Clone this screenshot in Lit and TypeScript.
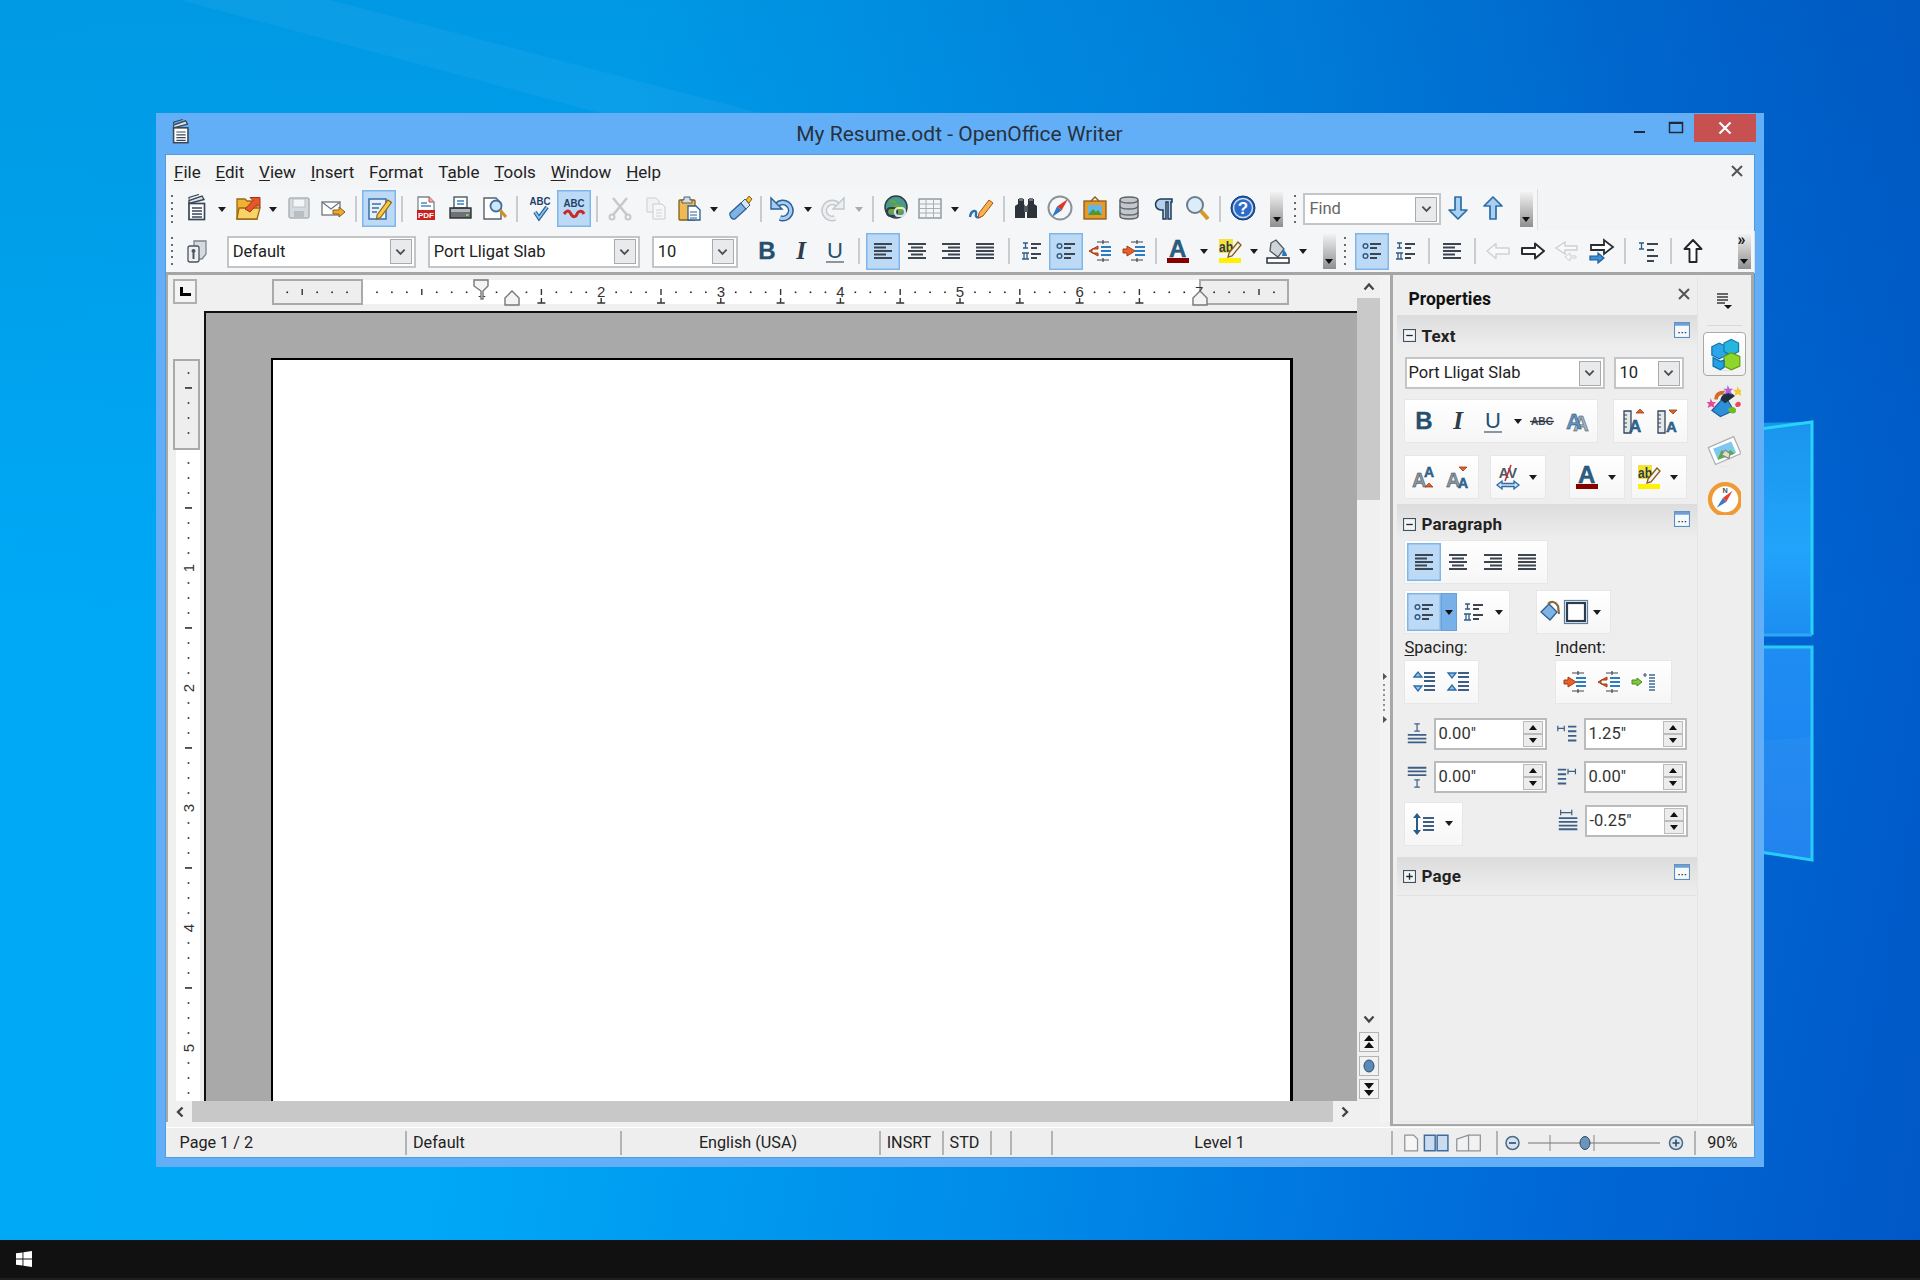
import { LitElement, html, css, svg, TemplateResult } from "lit";
import { customElement } from "lit/decorators.js";

const BL = "#24506f";
const lines = (rows: [number, number, number][], c = "#3d4650", w = 1.7) =>
  svg`<path d=${rows.map(([x, y, l]) => `M${x} ${y}h${l}`).join("")} stroke=${c} stroke-width=${w} fill="none"/>`;

const alignIcon = (rows: [number, number, number][]) => lines(rows, "#3d4650", 1.8);
const numList = svg`<path d="M5 6h5M7.5 6v5M5 11h5M4 16h7M6 16v6M9 16v6M4 22h7" stroke="#2f5c86" stroke-width="1.3" fill="none"/>${lines([[13, 7, 10], [13, 11, 6], [13, 17, 10], [13, 21, 6]], "#3d4650", 1.8)}`;
const bulletList = svg`<circle cx="7.5" cy="9" r="2.3" fill="#cfe2f4" stroke="#2f5c86" stroke-width="1.5"/><circle cx="7.5" cy="19" r="2.3" fill="#cfe2f4" stroke="#2f5c86" stroke-width="1.5"/>${lines([[12, 7, 11], [12, 11, 7], [12, 17, 11], [12, 21, 7]], "#3d4650", 1.8)}`;
const indentBody = svg`<path d="M9 5h12M9 23h12M15 3v4M15 21v4" stroke="#3d4650" stroke-width="1.2"/><path d="M13 10h10M13 14h10M13 18h10" stroke="#2b7cc0" stroke-width="2.2"/>`;
const outline = (d: string, c = "#222", f = "#fff", w = 1.8) => svg`<path d=${d} fill=${f} stroke=${c} stroke-width=${w} stroke-linejoin="round"/>`;
const R_ARROW = "M3 11h13V6.500l9 7.500-9 7.500V17H3z";
const L_ARROW = "M25 11H12V6.500L3 14l9 7.500V17h13z";
const bigA = (x: number, y: number, s: number, c: string) => svg`<text x=${x} y=${y} font-size=${s} font-weight="700" font-family="Liberation Sans" fill=${c} stroke="#173a55" stroke-width=".4">A</text>`;
const tri = (x: number, y: number, up: boolean, c = "#e0612a") => svg`<path d=${up ? `M${x} ${y + 4}l4-4 4 4z` : `M${x} ${y}h8l-4 4z`} fill=${c} stroke="#9a3d14" stroke-width=".8"/>`;
const undoShape = (a: string, b: string) => svg`<path d="M9 11a8 8 0 1 1 3 13" fill="none" stroke=${a} stroke-width="6"/><path d="M9 11a8 8 0 1 1 3 13" fill="none" stroke=${b} stroke-width="3"/><path d="M3 4v11h11z" fill=${b} stroke=${a} stroke-width="1.400"/>`;
const redoShape = (a: string, b: string) => svg`<g transform="translate(28 0) scale(-1 1)">${undoShape(a, b)}</g>`;
const blueLines = (rows: [number, number, number][]) => lines(rows, "#3d5f86", 2);

const ICONS: Record<string, TemplateResult> = {
  writer: svg`<path d="M6 9.500V6.500L19 2l2 3.500L6 9.500z" fill="#dfe5ea" stroke="#3a4858" stroke-width="1.400"/><path d="M6 5.500V3.500l10-3" fill="none" stroke="#3a4858" stroke-width="1.200"/><rect x="6" y="9.500" width="15.500" height="16" fill="#fff" stroke="#3a4858" stroke-width="1.700"/>${lines([[9, 14, 10], [9, 17, 10], [9, 20, 10], [9, 23, 10]], "#3a4858", 1.3)}`,
  open: svg`<path d="M3 5h8l2 2h10v18H3z" fill="#efb234" stroke="#9a6812" stroke-width="1.300"/><path d="M3 25l2-11h21l-3 11z" fill="#fbd266" stroke="#9a6812" stroke-width="1.300"/><path d="M11 15l8-8.500-3-3h10v10l-3-3-7 7.500z" fill="#e8552c" stroke="#a5340f"/>`,
  save: svg`<rect x="4" y="4" width="20" height="20" rx="2" fill="#d5dade" stroke="#aeb3b7" stroke-width="1.500"/><rect x="8" y="5" width="12" height="8" fill="#f4f5f6" stroke="#bcc0c4"/><rect x="9" y="17" width="10" height="7" fill="#b9bec2"/>`,
  mail: svg`<rect x="3" y="8" width="18" height="13" fill="#fff" stroke="#6d7680" stroke-width="1.300"/><path d="M3 8l9 7 9-7" fill="none" stroke="#6d7680" stroke-width="1.200"/><path d="M14 16h6v-3l6 5-6 5v-3h-6z" fill="#f0a92c" stroke="#8a5c12"/>`,
  edit: svg`<rect x="4" y="5" width="17" height="20" fill="#e8f1fa" stroke="#3a6ea5" stroke-width="1.500"/>${lines([[7, 10, 9], [7, 14, 7], [7, 18, 5]], "#3a6ea5", 1.4)}<path d="M12 21L23 6l3.500 2.500L15.500 23.500 11.500 25z" fill="#f7c948" stroke="#8f6410" stroke-width="1.200"/>`,
  pdf: svg`<path d="M6 3h11l5 5v17H6z" fill="#fff" stroke="#7a8794" stroke-width="1.300"/><path d="M9 9h6M9 12h10" stroke="#4e89c2" stroke-width="1.500"/><path d="M17 3v5h5" fill="#f0b2a2" stroke="#c14a33"/><rect x="5" y="16" width="18" height="10" fill="#c92020"/><text x="14" y="24" text-anchor="middle" font-size="8" font-weight="700" font-family="Liberation Sans" fill="#fff">PDF</text>`,
  print: svg`<rect x="8" y="3" width="13" height="11" fill="#fff" stroke="#4c5a68" stroke-width="1.400"/><path d="M11 7h7M11 10h7" stroke="#3a80c0" stroke-width="1.400"/><path d="M4 14h21v10H4z" fill="#6b7177" stroke="#2f3338" stroke-width="1.400"/><path d="M5 15h19v3H5z" fill="#aeb4b9"/><rect x="20" y="20" width="2.500" height="2" fill="#8fcf4f"/>`,
  preview: svg`<path d="M4 4h12l5 5v16H4z" fill="#fff" stroke="#57616c" stroke-width="1.400"/><circle cx="16" cy="12" r="5.500" fill="#cfe5f8" stroke="#3a6ea5" stroke-width="1.800"/><path d="M20 16l6 7" stroke="#d09020" stroke-width="3"/>`,
  spell: svg`<text x="14" y="11" text-anchor="middle" font-size="11" font-weight="700" font-family="Liberation Sans" fill="#1f3f68" textLength="21" lengthAdjust="spacingAndGlyphs">ABC</text><path d="M9 18l4 6 8-11" fill="none" stroke="#1f5f99" stroke-width="4"/><path d="M9 18l4 6 8-11" fill="none" stroke="#8cc2ee" stroke-width="1.800"/>`,
  autospell: svg`<text x="14" y="13" text-anchor="middle" font-size="11" font-weight="700" font-family="Liberation Sans" fill="#1f3f68" textLength="21" lengthAdjust="spacingAndGlyphs">ABC</text><path d="M4 20c3-4 5-4 7 0s5 3 6 0 5-4 7 0" fill="none" stroke="#c62a2a" stroke-width="3"/>`,
  cut: svg`<g stroke="#c6c9cc" fill="none"><path d="M7 4l14 17M21 4L7 21" stroke-width="2.500"/><circle cx="6" cy="23" r="2.500" stroke-width="2"/><circle cx="22" cy="23" r="2.500" stroke-width="2"/></g>`,
  copy: svg`<path d="M6 4h9l3 3v11H6z" fill="#f1f2f3" stroke="#ccd0d3"/><path d="M12 10h9l3 3v12H12z" fill="#f6f7f8" stroke="#c8ccd0"/><path d="M15 16h6M15 19h6M15 22h6" stroke="#d0d4d8"/>`,
  paste: svg`<rect x="4" y="6" width="16" height="20" rx="1" fill="#efba52" stroke="#80601c" stroke-width="1.300"/><path d="M9 6V3h6v3h2v3H7V6z" fill="#d8dde2" stroke="#55606a"/><path d="M13 12h8l4 4v10H13z" fill="#fff" stroke="#2d5e92" stroke-width="1.300"/><path d="M15 18h7M15 21h7M15 24h7" stroke="#2d5e92"/>`,
  brush: svg`<path d="M4 19l11-10 5 6-11 10c-3 1-6-3-5-6z" fill="#7fb2e5" stroke="#2d5e92" stroke-width="1.300"/><path d="M15 9l4-4 5 6-4 4z" fill="#d9e7f5" stroke="#2d5e92"/><path d="M20 6l3-4 3 3-3 4z" fill="#f2c02f" stroke="#8a6412"/>`,
  undo: undoShape("#2b5f94", "#a6cdf1"),
  redo: redoShape("#c2c7cb", "#eceef0"),
  globe: svg`<circle cx="14" cy="13" r="11" fill="#4a9a8a" stroke="#2f3d4c" stroke-width="1.500"/><path d="M7 7c4-2 8 0 7 3s-8 2-9 6c3 5 13 6 17 0 1-4-3-4-5-5" fill="#6fa82e"/><rect x="5" y="14" width="10" height="8" rx="3.500" fill="none" stroke="#323c44" stroke-width="2.200"/><rect x="13" y="14" width="10" height="8" rx="3.500" fill="none" stroke="#dfe3e6" stroke-width="2.200"/>`,
  table: svg`<rect x="3" y="5" width="22" height="19" fill="#f4f5f6" stroke="#8b949c" stroke-width="1.400"/><path d="M3 10h22M3 14.500h22M3 19h22M10 5v19M17.500 5v19" stroke="#a8afb6"/>`,
  draw: svg`<path d="M3 23c1-7 7-8 6-3s4 4 6 0" fill="none" stroke="#2b70b5" stroke-width="2.400"/><path d="M12 19L22 6l4 3-10 13-5 2z" fill="#f3b54a" stroke="#b14a20"/>`,
  binoc: svg`<path d="M6 5h6v5l1 2v12H3V12l3-2zM16 5h6v5l3 2v12H15V12l1-2z" fill="#2c333a"/><rect x="12" y="12" width="4" height="6" fill="#545c64"/><rect x="7" y="4" width="4" height="3" fill="#6c747c"/><rect x="17" y="4" width="4" height="3" fill="#6c747c"/>`,
  compass: svg`<circle cx="14" cy="14" r="11.500" fill="#f4f6f8" stroke="#8a939b" stroke-width="2"/><path d="M22 5L11 12.500l4.500 4z" fill="#d63a2a"/><path d="M6 23l5-10.500 4.500 4z" fill="#2a78c6"/>`,
  gallery: svg`<rect x="3" y="7" width="22" height="18" fill="#e59b2c" stroke="#8a5a14" stroke-width="1.300"/><rect x="7" y="11" width="14" height="10" fill="#63b7e8"/><path d="M7 21l5-6 3 3 2-2 4 5z" fill="#4d9a2c"/><path d="M10 7l4-4 4 4" fill="none" stroke="#8a5a14" stroke-width="1.300"/>`,
  db: svg`<path d="M5 6c0-4 18-4 18 0v16c0 4-18 4-18 0z" fill="#c4c8cc" stroke="#5d646b" stroke-width="1.500"/><path d="M5 6c0 4 18 4 18 0M5 12c0 4 18 4 18 0M5 18c0 4 18 4 18 0" fill="none" stroke="#5d646b" stroke-width="1.300"/>`,
  pilcrow: svg`<path d="M23 5H12a5.500 5.500 0 0 0 0 11h2v9h3V8h2v17h3V8h1z" fill="#b4d0ec" stroke="#1e3a56" stroke-width="1.500"/>`,
  zoom: svg`<circle cx="12" cy="11" r="8" fill="#dcedfa" stroke="#6c7c8a" stroke-width="2"/><path d="M18 17l7 8" stroke="#d39a28" stroke-width="4"/>`,
  help: svg`<circle cx="14" cy="14" r="12" fill="#1f55ab" stroke="#153c7c"/><circle cx="14" cy="14" r="9.500" fill="#2f6cc8" stroke="#cfe0f5" stroke-width="1.500"/><text x="14" y="20" text-anchor="middle" font-size="17" font-weight="700" font-family="Liberation Sans" fill="#fff">?</text>`,
  down: svg`<path d="M11 3h6v13h6L14 25 5 16h6z" fill="#a9d0f2" stroke="#2c6ca6" stroke-width="1.700" stroke-linejoin="round"/>`,
  up: svg`<path d="M11 25h6V12h6L14 3 5 12h6z" fill="#a9d0f2" stroke="#2c6ca6" stroke-width="1.700" stroke-linejoin="round"/>`,
  styles: svg`<path d="M11 4h12v13l-4 5h-8z" fill="#d6dade" stroke="#7b858e" stroke-width="1.300"/><rect x="5" y="9" width="11" height="16" rx="2" fill="#eef0f2" stroke="#4a5560" stroke-width="1.300"/><circle cx="10.500" cy="14" r="2" fill="#4a5560"/><path d="M10.500 16v6" stroke="#4a5560" stroke-width="2"/>`,
  left: alignIcon([[5, 7, 18], [5, 10.5, 12], [5, 14, 18], [5, 17.5, 12], [5, 21, 18]]),
  center: alignIcon([[5, 7, 18], [8, 10.5, 12], [5, 14, 18], [8, 17.5, 12], [5, 21, 18]]),
  right: alignIcon([[5, 7, 18], [11, 10.5, 12], [5, 14, 18], [11, 17.5, 12], [5, 21, 18]]),
  just: alignIcon([[5, 7, 18], [5, 10.5, 18], [5, 14, 18], [5, 17.5, 18], [5, 21, 18]]),
  num: numList,
  bullet: bulletList,
  indL: svg`<g transform="translate(2 0)">${indentBody}<path d="M11 9v3H5v4h6v3L2 14z" transform="translate(-1 0)" fill="#e8602c" stroke="#a03c14"/></g>`,
  indR: svg`<g transform="translate(2 0)">${indentBody}<path d="M4 9v3H0v4h4v3l8-5z" transform="translate(1 0)" fill="#e8602c" stroke="#a03c14"/></g>`,
  fontc: svg`${bigA(5, 20, 24, "#2a5f86")}<rect x="3" y="21" width="22" height="5" fill="#870000"/>`,
  high: svg`<rect x="3" y="2" width="14" height="14" fill="#f3e23c"/><text x="3" y="15" font-size="14" font-weight="700" font-family="Liberation Sans" fill="#2d3a46" textLength="14" lengthAdjust="spacingAndGlyphs">ab</text><path d="M13 16l9-11 3 3-9 11-4 1z" fill="#f1f4f6" stroke="#8a5b14" stroke-width="1.300"/><rect x="3" y="21" width="22" height="5" fill="#fff200"/>`,
  bgc: svg`<path d="M7 6l5-3 8 9-6 8-8-6z" fill="#cfd5da" stroke="#4e5963" stroke-width="1.300"/><path d="M19 12c3 3 4 5 4 7h-5" fill="#2a78b5"/><rect x="3" y="21" width="22" height="5" fill="#fff" stroke="#2b333b" stroke-width="1.500"/>`,
  lDis: outline(L_ARROW, "#cfd3d6", "#f8f9fa", 1.5),
  rBlk: outline(R_ARROW, "#2a2e33", "#fff", 2),
  lrDis: svg`<path d="M24 9H12V5L3 11l9 6v-4h12z" fill="#f8f9fa" stroke="#cdd1d4" stroke-width="1.400"/><path d="M23 19h-6v-3l-5 4 5 4v-3h6z" fill="#f8f9fa" stroke="#cdd1d4"/>`,
  rrBlk: svg`<path d="M4 8h13V3l9 7-9 7v-4H4z" fill="#fff" stroke="#2a2e33" stroke-width="1.800"/><path d="M3 19h8v-3l6 5-6 5v-3H3z" fill="#3d8fd6" stroke="#1c5a94" stroke-width="1.200"/>`,
  one: svg`<path d="M4 6h5M6.500 6v6M4 12h5" stroke="#2f5c86" stroke-width="1.300"/>${lines([[12, 7, 11], [12, 13, 7], [12, 19, 11], [12, 24, 7]], "#3d4650", 1.8)}`,
  upO: outline("M10.500 25h7V12h5L14 3 5.500 12h5z", "#23272b", "#fff", 1.9),
  B: svg`<text x="14" y="22" text-anchor="middle" font-size="24" font-weight="700" font-family="Liberation Sans" fill=${BL} stroke=${BL} stroke-width=".3">B</text>`,
  I: svg`<text x="14" y="22" text-anchor="middle" font-size="25" font-weight="700" font-style="italic" font-family="Liberation Serif" fill="#2f3d4a">I</text>`,
  U: svg`<text x="14" y="21" text-anchor="middle" font-size="22" font-family="Liberation Sans" fill=${BL}>U</text><path d="M5 25h18" stroke="#6e7f8e" stroke-width="1.600"/>`,
  abc: svg`<text x="14" y="18" text-anchor="middle" font-size="10" font-weight="700" font-family="Liberation Sans" fill="#3d4a56" textLength="22" lengthAdjust="spacingAndGlyphs">ABC</text><path d="M2 14.500h24" stroke="#2f3a44" stroke-width="1.300"/>`,
  shadowA: svg`${bigA(10, 24, 22, "#a5adb4")}${bigA(3, 22, 22, "#5f93c2")}`,
  grow: svg`<path d="M4 4h7v22H4z" fill="#e4e8ea" stroke="#34465a" stroke-width="1.300"/><path d="M4 8h3M4 12h3M4 16h3M4 20h3" stroke="#34465a"/>${bigA(9, 25, 17, "#2f6d9c")}${tri(16, 2, true)}`,
  shrink: svg`<path d="M4 4h7v22H4z" fill="#e4e8ea" stroke="#34465a" stroke-width="1.300"/><path d="M4 8h3M4 12h3M4 16h3M4 20h3" stroke="#34465a"/>${bigA(12, 25, 15, "#2f6d9c")}${tri(15, 3, false)}`,
  sup: svg`${bigA(1, 24, 20, "#8c959c")}${bigA(13, 14, 14, "#2f6d9c")}${tri(14, 20, true)}`,
  sub: svg`${bigA(1, 24, 20, "#8c959c")}${bigA(13, 25, 14, "#2f6d9c")}${tri(14, 4, false)}`,
  av: svg`<text x="14" y="15" text-anchor="middle" font-size="14" font-weight="700" font-family="Liberation Sans" fill="#4a5864">AV</text><path d="M17 2l-6 16" stroke="#c62a2a" stroke-width="1.500"/><path d="M3 22l5-4v2.500h12V18l5 4-5 4v-2.500H8V26z" fill="#cfe4f7" stroke="#2c6ca6" stroke-width="1.300"/>`,
  fill: svg`<path d="M2 14l8-8 8 8-7 8z" fill="#7fb2e5" stroke="#2d5e92" stroke-width="1.300"/><path d="M9 6c3-3 7-3 10 2l1 8" fill="none" stroke="#8a6a3a" stroke-width="2.200"/>`,
  border: svg`<rect x="5" y="5" width="18" height="18" fill="#fff" stroke="#2f3d4a" stroke-width="2.200"/><rect x="2.500" y="2.500" width="23" height="23" fill="none" stroke="#5d7fa5" stroke-width="1.200"/>`,
  spInc: svg`<path d="M3 9l4-5 4 5z" fill="#8ec4ef" stroke="#2c6ca6" stroke-width="1.300"/><path d="M3 18h8l-4 5z" fill="#8ec4ef" stroke="#2c6ca6" stroke-width="1.300"/>${blueLines([[13, 5, 11], [13, 9, 11], [13, 13, 11], [13, 18, 11], [13, 22, 11]])}`,
  spDec: svg`<path d="M3 5h8l-4 5z" fill="#8ec4ef" stroke="#2c6ca6" stroke-width="1.300"/><path d="M3 22l4-5 4 5z" fill="#8ec4ef" stroke="#2c6ca6" stroke-width="1.300"/>${blueLines([[13, 5, 11], [13, 9, 11], [13, 14, 11], [13, 18, 11], [13, 22, 11]])}`,
  hang: svg`<path d="M7 10v2H2v4h5v2l5-4z" fill="#7dc93c" stroke="#4d8a18"/><path d="M13 7h4M15 5v4" stroke="#3d5f86" stroke-width="1.200"/><path d="M19 7h6M19 10h6M19 13h6M19 16h6M19 19h6M19 22h6" stroke="#6f8db0" stroke-width="1.800"/>`,
  spAbove: svg`<path d="M10 3h6M13 3v8M10 11h6" stroke="#3d5f86" stroke-width="1.300" fill="none"/>${blueLines([[3, 15, 20], [3, 19, 20], [3, 23, 20]])}`,
  spBelow: svg`<path d="M10 17h6M13 17v8M10 25h6" stroke="#3d5f86" stroke-width="1.300" fill="none"/>${blueLines([[3, 4, 20], [3, 8, 20], [3, 12, 20]])}`,
  inBefore: svg`<path d="M3 5v6M3 8h7M10 5v6" stroke="#3d5f86" stroke-width="1.300" fill="none"/>${blueLines([[14, 6, 9], [14, 11, 9], [14, 16, 9], [14, 21, 9]])}`,
  inAfter: svg`<path d="M14 5v6M14 8h8M22 5v6" stroke="#3d5f86" stroke-width="1.300" fill="none"/>${blueLines([[3, 6, 9], [3, 11, 9], [3, 16, 9], [3, 21, 9]])}`,
  inFirst: svg`<path d="M5 3v6M5 6h12M17 3v6" stroke="#3d5f86" stroke-width="1.300" fill="none"/>${blueLines([[3, 12, 20], [3, 16, 20], [3, 20, 20], [3, 24, 20]])}`,
  lineSp: svg`<path d="M7 6v16" stroke="#2c5c86" stroke-width="2"/><path d="M3 8l4-5 4 5zM3 20h8l-4 5z" fill="#2c5c86"/>${blueLines([[13, 8, 11], [13, 12, 11], [13, 16, 11], [13, 20, 11]])}`,
  tabProps: svg`<path d="M4 8l6-3 6 3v7l-6 3-6-3z" fill="#2ca6e8" stroke="#0f6fb0"/><path d="M14 5l6-3 6 3v7l-6 3-6-3z" fill="#25b6df" stroke="#0f7fb0"/><path d="M14 16l6-3 7 3v8l-7 3-6-3z" fill="#8ed52c" stroke="#5f9e12"/><path d="M5 17l6 3 3-1v6l-3 2-6-3z" fill="#22a0e0" stroke="#0f6fb0"/><ellipse cx="15" cy="29" rx="12" ry="1.500" fill="#c8c8c8"/>`,
  tabStyles: svg`<path d="M4 21L15 9l7 12-11 5z" fill="#2c8fd8" stroke="#1d5f96"/><path d="M11 12c2-6 7-8 12-3l-8 6z" fill="#20303e"/><path d="M6 12c0-6 5-8 9-7l-2 3c-3 0-4 2-4 4z" fill="#d86a28"/><path d="M3 11l1.500 3h3l-2 2 1 3-3-1.500L.5 19l1-3-2-2h3z" fill="#e84a9a"/><path d="M17 0l1.500 3h3l-2 2 1 3-3-1.500L14.500 8l1-3-2-2h3z" fill="#b060e0"/><path d="M25 1l1.500 3h3l-2 2 1 3-3-1.500-3 1.500 1-3-2-2h3z" fill="#f4c830"/><path d="M25 14c3-1 4 3 1 4s-4-3-1-4z" fill="#e84a5a"/><path d="M17 20c3-3 7-2 7 1s-5 4-7-1z" fill="#70b82c"/><ellipse cx="13" cy="29" rx="10" ry="1.300" fill="#c8c8c8"/>`,
  tabGal: svg`<path d="M1 12L22 3l6 14-21 9z" fill="#fff" stroke="#aab0b5"/><path d="M5 13l15-6 4 9-15 6z" fill="#7ec8ef"/><path d="M9 21l3-7 4 3 3-3 4 3-14 5z" fill="#5cae3c"/><path d="M12 18l3-4 4 3-1 4z" fill="#e8e0c0" stroke="#7a8a9a"/><ellipse cx="15" cy="29" rx="10" ry="1.300" fill="#c8c8c8"/>`,
  tabNav: svg`<circle cx="15" cy="15" r="12.500" fill="#fff" stroke="#ef9a34" stroke-width="3.500"/><path d="M21 8l-8 6 3 3z" fill="#e8402c"/><path d="M8 22l5-8 3 3z" fill="#3a7ac6"/><text x="15" y="9.500" text-anchor="middle" font-size="6" font-weight="700" font-family="Liberation Sans" fill="#44525e">N</text>`,
};

const ic = (n: string, cls = "") => html`<svg class="ic ${cls}" viewBox="0 0 28 28">${ICONS[n]}</svg>`;

const ITEM = (s: string) => {
  if (s === "a") return html`<span class="a"></span>`;
  if (s === "a14") return html`<span class="a a14"></span>`;
  if (s === "ad") return html`<span class="a dis"></span>`;
  if (/^s\d*$/.test(s)) return html`<span class="s s${s.slice(1)}"></span>`;
  const on = s.endsWith("*");
  const n = on ? s.slice(0, -1) : s;
  return html`<span class="b ${on ? "on" : ""}">${ic(n)}</span>`;
};
const bar = (items: string[]) => items.map(ITEM);

const combo = (text: string, cls: string) => html`<div class="combo ${cls}"><span class="ct">${text}</span><span class="cb"><svg viewBox="0 0 12 8"><path d="M1.500 1.500L6 6l4.500-4.500" fill="none" stroke="#4a4f55" stroke-width="2"/></svg></span></div>`;
const spin = (val: string, cls: string) => html`<div class="spin ${cls}"><span class="ct">${val}</span><span class="sb"><i class="u"></i><i class="d"></i></span></div>`;
const more = html`<svg class="more" viewBox="0 0 15 15"><rect x=".5" y=".5" width="14" height="14" fill="#f6f9fc" stroke="#5a8cc0"/><rect x=".5" y=".5" width="14" height="3" fill="#6d9fd2"/><path d="M4 10h1.500M7 10h1.500M10 10h1.500" stroke="#3a4a5a" stroke-width="1.300"/></svg>`;
const exp = (open: boolean) => html`<svg class="exp" viewBox="0 0 12 12"><rect x=".5" y=".5" width="11" height="11" fill="#f4f4f4" stroke="#3e5264"/><path d=${open ? "M3 6h6" : "M3 6h6M6 3v6"} stroke="#1e2a34" stroke-width="1.200"/></svg>`;

const hDigit = (x: number, d: number) => svg`<text x=${x} y="18" text-anchor="middle" font-size="15" font-family="Liberation Sans" fill="#333">${d}</text>`;
const hRuler = () => {
  const ox = 90, inch = 119.6, marks = [] as unknown[];
  for (let i = -6; i <= 7 * 8 + 6; i++) {
    const x = ox + (i * inch) / 8;
    if (x < 6 || x > 1012) continue;
    if (i % 8 === 0 && i > 0) { marks.push(hDigit(x, i / 8)); continue; }
    if (i === 0) continue;
    if (i % 4 === 0) marks.push(svg`<rect x=${x - 0.7} y="10" width="1.400" height="6" fill="#333"/>`);
    else marks.push(svg`<rect x=${x - 0.8} y="12.500" width="1.600" height="1.600" fill="#222"/>`);
  }
  const tabs = [] as unknown[];
  for (let i = 3; i <= 13; i++) {
    const x = ox + (i * inch) / 2;
    tabs.push(svg`<path d=${`M${x} 19v4.500M${x - 4} 24h8`} stroke="#333" stroke-width="1.400" fill="none"/>`);
  }
  return html`<svg class="hr" viewBox="0 0 1018 27">
    <rect x="90" y="1" width="838" height="24" fill="#fff"/>
    <rect x="1" y="1" width="89" height="24" fill="#eee" stroke="#aaa" stroke-width="2"/>
    <rect x="928" y="1" width="88" height="24" fill="#eee" stroke="#aaa" stroke-width="2"/>
    ${marks}${tabs}
    <path d="M202 1h14v6l-5 5v8h-2V12l-7-5z" fill="#f4f4f4" stroke="#777" stroke-width="1.400"/>
    <path d="M233 19l7-7 7 7v7h-14z" fill="#f4f4f4" stroke="#777" stroke-width="1.400"/>
    <path d="M921 19l7-7 7 7v7h-14z" fill="#f4f4f4" stroke="#777" stroke-width="1.400"/>
  </svg>`;
};
const vRuler = () => {
  const oy = 137, inch = 120, marks = [] as unknown[];
  for (let i = -5; i <= 5 * 8 + 3; i++) {
    const y = oy + (i * inch) / 8;
    if (i === 0) continue;
    if (i % 8 === 0 && i > 0) { marks.push(svg`<text transform=${`rotate(-90 21 ${y})`} x="21" y=${y + 5} text-anchor="middle" font-size="15" font-family="Liberation Sans" fill="#333">${i / 8}</text>`); continue; }
    if (i % 4 === 0) marks.push(svg`<rect x="17" y=${y - 0.8} width="7" height="1.500" fill="#222"/>`);
    else marks.push(svg`<rect x="19.700" y=${y - 0.8} width="1.600" height="1.600" fill="#222"/>`);
  }
  return html`<svg class="vr" viewBox="0 0 36.500 790">
    <rect x="8" y="137" width="24" height="653" fill="#fff"/>
    <rect x="6" y="49" width="25" height="89" fill="#eee" stroke="#aaa" stroke-width="2"/>
    ${marks}
  </svg>`;
};

@customElement("app-root")
export class AppRoot extends LitElement {
  static styles = css`
    :host { display: flex; flex-direction: column; width: 1920px; height: 1280px; font-family: Roboto, "Liberation Sans", sans-serif; font-size: 17px; color: #222; overflow: hidden; }
    .desk { position: relative; flex: 1; background: linear-gradient(100deg, #00a9f5 0%, #00a8f7 30%, #008ae8 58%, #006bd9 80%, #0058c6 100%); overflow: hidden; }
    .wall { position: absolute; inset: 0; width: 1920px; height: 1240px; }
    .task { height: 40px; background: #111; display: flex; align-items: center; padding-left: 16px; border-bottom: 2px solid #1f1f1f; box-sizing: border-box; flex: none; }
    .task svg { width: 16px; height: 16px; }

    .win { position: absolute; left: 156px; top: 113px; width: 1608px; height: 1054px; background: #63aff7; box-sizing: border-box; padding: 0 10.500px 10px 9.500px; display: flex; flex-direction: column; }
    .tbar { height: 42px; flex: none; display: flex; position: relative; align-items: center; justify-content: center; }
    .tbar .appi { position: absolute; left: 2px; top: 6px; }
    .appi svg.ic { width: 26px; height: 26px; }
    .title { font-size: 21px; color: #27323d; line-height: 42px; }
    .caps { position: absolute; right: -2px; top: 1px; display: flex; align-items: flex-start; }
    .cap { width: 36px; height: 28px; display: flex; justify-content: center; align-items: center; }
    .close { width: 62px; background: #c75050; }
    .cap svg { width: 16px; height: 16px; }
    .client { flex: 1; background: #f3f4f6; display: flex; flex-direction: column; min-height: 0; box-shadow: 0 0 0 1px #4f9be6; }

    .menu { height: 33px; flex: none; display: flex; align-items: center; padding-left: 8.500px; gap: 14.800px; position: relative; }
    .menu span { font-size: 17px; }
    .menu u { text-underline-offset: 2px; }
    .mclose { position: absolute; right: 10px; top: 9px; width: 14px; height: 14px; }

    .rowtb { display: flex; align-items: center; flex: none; }
    .tb1 { height: 42px; }
    .tb1 .b { margin-bottom: 1.500px; }
    .tb2 { height: 42px; }
    .seg { display: flex; align-items: center; height: 100%; background: #f5f6f7; box-shadow: 1px 1px 0 #dedede; flex: none; }
    .seg.wide { flex: 1; min-width: 0; }
    .seg.wide .handle { margin-right: 9px; }
    .handle { width: 2px; height: 28px; margin: 0 7px 0 5px; background: repeating-linear-gradient(#6a6a6a 0 2px, transparent 2px 6.500px); flex: none; }
    .b { width: 34.200px; height: 37px; display: flex; align-items: center; justify-content: center; flex: none; box-sizing: border-box; }
    .b.on { background: #bcdaf6; box-shadow: inset 0 0 0 1.500px #80b5e8; }
    .ic { width: 28px; height: 28px; display: block; flex: none; }
    .a { width: 17px; display: flex; justify-content: center; flex: none; }
    .a14 { width: 14px; }
    .a::before { content: ""; border-style: solid; border-width: 5px 4.500px 0; border-color: #1c1c1c transparent transparent; }
    .a.dis::before { border-top-color: #a8acb0; }
    .s { width: 12px; height: 26px; display: flex; justify-content: center; flex: none; }
    .s::before { content: ""; width: 2px; background: #c9cbcd; }
    .s8 { width: 8px; } .s11 { width: 11px; } .s13 { width: 13.500px; } .s14 { width: 14px; } .s10 { width: 10px; }
    .grip { width: 13px; height: 35px; background: linear-gradient(#f2f2f2, #8f8f8f); flex: none; display: flex; align-items: flex-end; justify-content: center; padding-bottom: 5px; box-sizing: border-box; position: relative; }
    .grip::after { content: ""; border-style: solid; border-width: 5px 4px 0; border-color: #111 transparent transparent; }
    .grip .chev { position: absolute; top: -1px; left: 0; font-size: 16px; font-weight: 700; line-height: 13px; color: #111; }
    .g1 { margin-left: 10px; margin-right: 6px; }
    .g2 { margin-left: 10px; margin-right: 4px; }
    .g3 { margin-left: 11px; margin-right: 3px; }
    .g4 { margin-left: auto; margin-right: 3px; }

    .combo { height: 32px; background: #fff; box-sizing: border-box; border: 2px solid #c3c5c7; display: flex; align-items: center; flex: none; padding: 0 2px 0 4px; }
    .combo .ct { flex: 1; font-size: 16.500px; white-space: nowrap; overflow: hidden; line-height: 24px; }
    .cb { width: 22px; height: 25px; background: #e9eaeb; border: 1px solid #a9abad; box-sizing: border-box; display: flex; align-items: center; justify-content: center; flex: none; }
    .cb svg { width: 11px; height: 8px; }
    .tb2 .combo { margin-top: 1px; }
    .cstyle { width: 189px; margin-left: 13px; }
    .cfont { width: 212px; margin-left: 12px; }
    .csize { width: 86px; margin-left: 12px; margin-right: 12px; }
    .cfont2 { width: 200px; padding-left: 2px; }
    .csize2 { width: 70px; margin-left: 9px; }
    .cfind { width: 138px; }
    .cfind .ct { color: #666; }

    .main { flex: 1; min-height: 0; display: flex; border-top: 3px solid #a5a5a5; background: #f0f0f0; }
    .edit { flex: none; width: 1214.500px; display: flex; border-left: 2px solid #a8a8a8; box-sizing: border-box; margin-bottom: 5px; }
    .lcol { flex: 1; display: flex; flex-direction: column; min-width: 0; }
    .rul { height: 36px; flex: none; display: flex; align-items: flex-start; padding-top: 4px; box-sizing: border-box; }
    .corner { width: 24px; height: 25px; margin-left: 5.500px; margin-right: 75px; background: #f4f4f4; border: 2px solid #b0b0b0; box-sizing: border-box; display: flex; align-items: center; justify-content: center; flex: none; }
    .corner::before { content: ""; width: 8px; height: 6px; border-left: 3px solid #000; border-bottom: 3px solid #000; }
    .hr { width: 1018px; height: 27px; flex: none; }
    .mid { flex: 1; min-height: 0; display: flex; overflow: hidden; }
    .vr { width: 36.500px; height: 790px; flex: none; }
    .docv { flex: 1; background: #a9a9a9; border-left: 2px solid #111; border-top: 2px solid #111; overflow: hidden; padding: 45px 0 0 65px; box-sizing: border-box; min-width: 0; }
    .page { width: 1022px; height: 1000px; background: #fff; border: solid #000; border-width: 2px 3px 0 2px; box-sizing: border-box; }
    .hs { height: 21px; flex: none; display: flex; align-items: center; background: #f0f0f0; }
    .sbtn { width: 24px; display: flex; justify-content: center; flex: none; }
    .sbtn svg { width: 10px; height: 12px; }
    .track { flex: 1; height: 100%; background: #c8c8c8; }
    .vs { width: 23px; flex: none; display: flex; flex-direction: column; align-items: center; background: #f0f0f0; padding: 5px 0 23px; box-sizing: border-box; }
    .vs .varr { width: 14px; height: 14px; display: block; flex: none; }
    .vthumb { width: 100%; height: 202px; background: #c9c9c9; margin-top: 4px; flex: none; }
    .vfill { flex: 1; }
    .nav { width: 20px; height: 20px; box-sizing: border-box; border: 1px solid #b4b4b4; background: #f2f2f2; display: flex; align-items: center; justify-content: center; margin-top: 3.500px; flex: none; }
    .nav svg { width: 14px; height: 16px; }
    .vs .varr.dn { margin-bottom: 3px; }
    .sash { width: 9.500px; flex: none; position: relative; background: #f3f3f3; margin-bottom: 5px; }
    .grips { position: absolute; left: 2px; top: 398px; width: 6px; height: 50px; }

    .side { flex: 1; min-width: 0; display: flex; border: solid #a8a8a8; border-width: 0 3px 2px 3px; background: #eee; padding: 3px 0 0 4px; box-sizing: border-box; margin-bottom: 1px; }
    .panel { width: 301px; flex: none; display: flex; flex-direction: column; background: #eee; border: solid #e5e5e5; border-width: 0 1px 1px 0; box-sizing: border-box; margin-bottom: 2px; }
    .ptitle { height: 37px; flex: none; display: flex; align-items: center; justify-content: space-between; padding: 5px 6px 0 12px; box-sizing: border-box; }
    .ptitle b { font-size: 17.500px; font-weight: 700; color: #111; }
    .x { width: 14px; height: 14px; display: block; margin-top: -11px; }
    .shead { display: flex; align-items: center; flex: none; background: linear-gradient(#dcdcdc, #eeeeee); padding: 8px 0 0 6px; position: relative; box-sizing: border-box; }
    .shead b { font-size: 17px; font-weight: 700; margin-left: 6px; color: #222; letter-spacing: .2px; }
    .exp { width: 13px; height: 13px; flex: none; }
    .more { position: absolute; right: 7px; top: 7px; width: 16px; height: 16px; }
    .h1 { height: 33px; } .h2 { height: 35px; padding-top: 5px; } .h3 { height: 38px; padding-top: 0; }
    .mt6 { margin-top: 6px; } .mt14 { margin-top: 12.500px; } .mt2 { margin-top: 2px; }
    .pb { padding: 0 0 0 8px; display: flex; flex-direction: column; flex: none; }
    .row { display: flex; flex: none; align-items: flex-start; }
    .r-font { margin-top: 9px; } .r-t1 { margin-top: 11px; } .r-t2 { margin-top: 14px; }
    .r-a { margin-top: 2px; } .r-l { margin-top: 8px; }
    .r-lbl { margin-top: 3px; height: 22px; align-items: center; }
    .r-s { margin-top: 3px; } .r-f1 { margin-top: 14.500px; align-items: center; } .r-f2 { margin-top: 11px; align-items: center; } .r-f3 { margin-top: 10px; }
    .box { height: 42px; background: linear-gradient(#fff, #f6f6f6); box-shadow: 0 0 0 1px #e7e7e7; display: flex; align-items: center; flex: none; box-sizing: border-box; }
    .box .b { width: 34.500px; height: 38px; }
    .box .a { width: 15px; }
    .box .ic { width: 28px; height: 28px; }
    .nudge { margin-left: -5px; }
    .bx192 { width: 192px; padding-left: 2px; } .bx73 { width: 73px; margin-left: 17px; padding-left: 3px; }
    .bx73b { width: 73px; padding-left: 3px; } .bx54 { width: 54px; }
    .bx142 { width: 142px; padding-left: 2px; } .bx104 { width: 104px; padding-left: 2px; }
    .bx73c { width: 73px; padding-left: 2px; } .bx115 { width: 115px; padding-left: 2px; } .bx57 { width: 57px; padding-left: 2px; }
    .m13 { margin-left: 13px; } .m25 { margin-left: 25px; } .m8 { margin-left: 8px; } .m28 { margin-left: 28px; } .m78 { margin-left: 78px; } .m94 { margin-left: 94px; }
    .abtn { width: 16px; height: 38px; background: #78b1e9; box-shadow: inset 0 0 0 1px #6a9fd8; display: flex; align-items: center; justify-content: center; flex: none; }
    .abtn::before { content: ""; border-style: solid; border-width: 5px 4.500px 0; border-color: #111 transparent transparent; }
    .lbl { font-size: 16.500px; }
    .lbl u { text-underline-offset: 2px; }
    .w151 { width: 151px; }
    .spin { height: 32px; background: #fff; box-sizing: border-box; border: 2px solid #b9bbbd; display: flex; align-items: center; padding: 0 2px 0 3px; flex: none; }
    .spin .ct { flex: 1; font-size: 16.500px; color: #333; }
    .sb { width: 20px; height: 26px; display: flex; flex-direction: column; flex: none; }
    .sb i { flex: 1; background: #ececec; border: 1px solid #b9bbbd; display: flex; align-items: center; justify-content: center; }
    .sb i::before { content: ""; border-style: solid; border-color: #111 transparent; }
    .sb i.u::before { border-width: 0 4.500px 5px; }
    .sb i.d::before { border-width: 5px 4.500px 0; }
    .s1 { width: 113px; } .s2 { width: 103px; }
    .rowi { width: 29px; display: flex; justify-content: flex-start; flex: none; }
    .rowi .ic { width: 26px; height: 26px; }
    .r-f3 .rowi { margin-top: 4px; }
    .g9 { margin-left: 8px; }
    .pfill { flex: 1; border-top: 1px solid #e2e2e2; }

    .tabs { flex: 1; min-width: 0; display: flex; flex-direction: column; align-items: center; }
    .tmenu { width: 20px; height: 20px; margin-top: 12px; flex: none; }
    .tsep { width: 35px; height: 1px; background: #d9d9d9; margin-top: 15px; flex: none; }
    .tab { width: 43px; height: 44px; margin-top: 6px; box-sizing: border-box; border: 1.500px solid #a9a9a9; border-radius: 4px; background: linear-gradient(#fff, #f2f2f2); display: flex; align-items: center; justify-content: center; flex: none; }
    .tab .ic, .tabi .ic { width: 34px; height: 34px; }
    .tabi { height: 48px; width: 43px; display: flex; align-items: center; justify-content: center; flex: none; }
    .tab + .tabi { margin-top: 2px; }

    .status { height: 30px; flex: none; display: grid; grid-template-columns: 239.500px 215px 259px 63px 48px 20px 41px 340px 105px 198px 1fr; align-items: center; background: #eee; border-top: 1px solid #fff; box-sizing: border-box; font-size: 16.200px; color: #222; }
    .cell { height: 24px; display: flex; align-items: center; border-left: 2px solid #b4b4b4; box-sizing: border-box; white-space: nowrap; }
    .cell.first { border-left: 0; padding-left: 14px; }
    .pl { padding-left: 6px; } .c { justify-content: center; padding-right: 5px; }
    .cell svg { display: block; flex: none; }
    .vw { width: 103px; height: 24px; }
    .zoomc { width: 196px; height: 24px; }
  `;

  render() {
    return html`
      <div class="desk">
        <svg class="wall" viewBox="0 0 1920 1240">
          <defs>
            <linearGradient id="v" x1="0" y1="0" x2="0" y2="1"><stop offset="0" stop-color="#000a40" stop-opacity=".1"/><stop offset=".5" stop-color="#000a40" stop-opacity="0"/><stop offset="1" stop-color="#000" stop-opacity="0"/></linearGradient>
            <linearGradient id="p1" x1="0" y1="0" x2="0" y2="1"><stop offset="0" stop-color="#1a95ee"/><stop offset=".6" stop-color="#22a4fb"/><stop offset="1" stop-color="#1c8df2"/></linearGradient>
            <linearGradient id="p2" x1="0" y1="0" x2="0" y2="1"><stop offset="0" stop-color="#1f8df3"/><stop offset="1" stop-color="#1a7fee"/></linearGradient>
          </defs>
          <rect width="1920" height="1240" fill="url(#v)"/>
          <path d="M330 0L760 113H600L180 0z" fill="#fff" opacity=".045"/>
          <path d="M1700 424L1812 422V635H1700z" fill="url(#p1)"/>
          <path d="M1700 646H1812V860L1700 846z" fill="url(#p2)"/>
          <path d="M1700 745L1812 737V860L1700 846z" fill="#fff" opacity=".035"/>
          <path d="M1760 429L1812 422V635" fill="none" stroke="#27d3f8" stroke-width="3"/>
          <path d="M1764 635H1812" stroke="#2da8f8" stroke-width="3"/>
          <path d="M1764 647H1812V860L1760 852" fill="none" stroke="#27cdf8" stroke-width="3"/>
        </svg>
        <div class="win">
          <div class="tbar">
            <span class="appi">${ic("writer")}</span>
            <span class="title">My Resume.odt - OpenOffice Writer</span>
            <div class="caps">
              <div class="cap"><svg viewBox="0 0 16 16"><path d="M2 12h11" stroke="#1d2a38" stroke-width="2"/></svg></div>
              <div class="cap"><svg viewBox="0 0 16 16"><rect x="1.500" y="2.500" width="13" height="10" fill="none" stroke="#1d2a38" stroke-width="1.500"/><path d="M1 3h14" stroke="#1d2a38" stroke-width="2"/></svg></div>
              <div class="cap close"><svg viewBox="0 0 16 16"><path d="M2.500 2.500l11 11M13.500 2.500l-11 11" stroke="#fff" stroke-width="2.200"/></svg></div>
            </div>
          </div>
          <div class="client">
            <div class="menu">
              <span><u>F</u>ile</span><span><u>E</u>dit</span><span><u>V</u>iew</span><span><u>I</u>nsert</span><span>F<u>o</u>rmat</span><span>T<u>a</u>ble</span><span><u>T</u>ools</span><span><u>W</u>indow</span><span><u>H</u>elp</span>
              <svg class="mclose" viewBox="0 0 14 14"><path d="M2 2l10 10M12 2L2 12" stroke="#555" stroke-width="2"/></svg>
            </div>
            <div class="rowtb tb1">
              <div class="seg">
                <span class="handle"></span>
                ${bar(["writer", "a", "open", "a", "save", "mail", "s", "edit*", "s", "pdf", "print", "preview", "s", "spell", "autospell*", "s", "cut", "copy", "paste", "a", "brush", "s8", "undo", "a", "redo", "ad", "s11", "globe", "table", "a", "draw", "s11", "binoc", "compass", "gallery", "db", "pilcrow", "zoom", "s", "help"])}
                <span class="grip g1"></span>
              </div>
              <div class="seg">
                <span class="handle"></span>
                ${combo("Find", "cfind")}
                <span class="b">${ic("down")}</span><span class="b">${ic("up")}</span>
                <span class="grip g2"></span>
              </div>
            </div>
            <div class="rowtb tb2">
              <div class="seg">
                <span class="handle"></span>
                ${bar(["styles"])}
                ${combo("Default", "cstyle")}${combo("Port Lligat Slab", "cfont")}${combo("10", "csize")}
                ${bar(["B", "I", "U", "s13", "left*", "center", "right", "just", "s", "num", "bullet*", "indL", "indR", "s10", "fontc", "a", "high", "a14", "bgc", "a"])}
                <span class="grip g3"></span>
              </div>
              <div class="seg wide">
                <span class="handle"></span>
                ${bar(["bullet*", "num", "s", "left", "s", "lDis", "rBlk", "lrDis", "rrBlk", "s14", "one", "s10", "upO"])}
                <span class="grip g4"><span class="chev">»</span></span>
              </div>
            </div>
            <div class="main">
              <div class="edit">
                <div class="lcol">
                  <div class="rul"><span class="corner"></span>${hRuler()}</div>
                  <div class="mid">
                    ${vRuler()}
                    <div class="docv"><div class="page"></div></div>
                  </div>
                  <div class="hs">
                    <span class="sbtn"><svg viewBox="0 0 10 12"><path d="M7.500 1.500L3 6l4.500 4.500" fill="none" stroke="#444" stroke-width="2.400"/></svg></span>
                    <span class="track"></span>
                    <span class="sbtn"><svg viewBox="0 0 10 12"><path d="M2.500 1.500L7 6l-4.500 4.500" fill="none" stroke="#444" stroke-width="2.400"/></svg></span>
                  </div>
                </div>
                <div class="vs">
                  <svg class="varr" viewBox="0 0 14 14"><path d="M2.500 9.500L7 4.500l4.500 5" fill="none" stroke="#444" stroke-width="2.200"/></svg>
                  <div class="vthumb"></div>
                  <div class="vfill"></div>
                  <svg class="varr dn" viewBox="0 0 14 14"><path d="M2.500 4.500L7 9.500l4.500-5" fill="none" stroke="#444" stroke-width="2.200"/></svg>
                  <div class="nav"><svg viewBox="0 0 14 16"><path d="M7 1l5 6H2zM7 8l5 6H2z" fill="#111"/></svg></div>
                  <div class="nav"><svg viewBox="0 0 14 16"><ellipse cx="7" cy="8" rx="5" ry="6" fill="#5a8ab5" stroke="#2d4c68"/></svg></div>
                  <div class="nav"><svg viewBox="0 0 14 16"><path d="M2 2h10L7 8zM2 9h10l-5 6z" fill="#111"/></svg></div>
                </div>
              </div>
              <div class="sash">
                <svg class="grips" viewBox="0 0 6 50"><path d="M1 0l4 3.500L1 7zM1 43l4 3.500L1 50z" fill="#555"/><path d="M2 11v2M2 16v2M2 21v2M2 26v2M2 31v2M2 36v2" stroke="#666" stroke-width="1.400"/></svg>
              </div>
              <div class="side">
                <div class="panel">
                  <div class="ptitle"><b>Properties</b><svg class="x" viewBox="0 0 14 14"><path d="M2 2l10 10M12 2L2 12" stroke="#555" stroke-width="2"/></svg></div>
                  <div class="shead h1">${exp(true)}<b>Text</b>${more}</div>
                  <div class="pb">
                    <div class="row r-font">${combo("Port Lligat Slab", "cfont2")}${combo("10", "csize2")}</div>
                    <div class="row r-t1">
                      <div class="box bx192">${bar(["B", "I", "U", "a", "abc", "shadowA"])}</div>
                      <div class="box bx73">${bar(["grow", "shrink"])}</div>
                    </div>
                    <div class="row r-t2">
                      <div class="box bx73b">${bar(["sup", "sub"])}</div>
                      <div class="box bx54 m13">${bar(["av", "a"])}</div>
                      <div class="box bx54 m25">${bar(["fontc", "a"])}</div>
                      <div class="box bx54 m8">${bar(["high", "a"])}</div>
                    </div>
                  </div>
                  <div class="shead h2 mt6">${exp(true)}<b>Paragraph</b>${more}</div>
                  <div class="pb">
                    <div class="row r-a"><div class="box bx142">${bar(["left*", "center", "right", "just"])}</div></div>
                    <div class="row r-l">
                      <div class="box bx104">${bar(["bullet*"])}<span class="abtn"></span>${bar(["num", "a"])}</div>
                      <div class="box bx73c m28">${ic("fill")}${ic("border", "nudge")}<span class="a"></span></div>
                    </div>
                    <div class="row r-lbl"><span class="lbl w151"><u>S</u>pacing:</span><span class="lbl"><u>I</u>ndent:</span></div>
                    <div class="row r-s">
                      <div class="box bx73b">${bar(["spInc", "spDec"])}</div>
                      <div class="box bx115 m78">${bar(["indR", "indL", "hang"])}</div>
                    </div>
                    <div class="row r-f1"><span class="rowi">${ic("spAbove")}</span>${spin('0.00"', "s1")}<span class="rowi g9">${ic("inBefore")}</span>${spin('1.25"', "s2")}</div>
                    <div class="row r-f2"><span class="rowi">${ic("spBelow")}</span>${spin('0.00"', "s1")}<span class="rowi g9">${ic("inAfter")}</span>${spin('0.00"', "s2")}</div>
                    <div class="row r-f3"><div class="box bx57">${bar(["lineSp", "a"])}</div><span class="rowi m94">${ic("inFirst")}</span>${spin('-0.25"', "s2 mt2")}</div>
                  </div>
                  <div class="shead h3 mt14">${exp(false)}<b>Page</b>${more}</div>
                  <div class="pfill"></div>
                </div>
                <div class="tabs">
                  <svg class="tmenu" viewBox="0 0 20 20"><path d="M3 4h11M3 7h11M3 10h11M3 13h8" stroke="#3a3a3a" stroke-width="1.400"/><path d="M10 15h8l-4 4z" fill="#111"/></svg>
                  <span class="tsep"></span>
                  <div class="tab">${ic("tabProps")}</div>
                  <div class="tabi">${ic("tabStyles")}</div>
                  <div class="tabi">${ic("tabGal")}</div>
                  <div class="tabi">${ic("tabNav")}</div>
                </div>
              </div>
            </div>
            <div class="status">
              <div class="cell first">Page 1 / 2</div>
              <div class="cell pl">Default</div>
              <div class="cell c">English (USA)</div>
              <div class="cell c">INSRT</div>
              <div class="cell c">STD</div>
              <div class="cell"></div>
              <div class="cell"></div>
              <div class="cell c">Level 1</div>
              <div class="cell">
                <svg class="vw" viewBox="0 0 105 24">
                  <path d="M12 4h9l4 4v12H12z" fill="#f6f6f6" stroke="#8e9499" stroke-width="1.300"/>
                  <path d="M32 4h11v16H32zM45 4h11v16H45z" fill="#c9dcf0" stroke="#3f6c9e" stroke-width="1.500"/>
                  <path d="M65 8l12-4v16H65zM77 4h12v16H77z" fill="#f2f2f2" stroke="#8e9499" stroke-width="1.300"/>
                </svg>
              </div>
              <div class="cell">
                <svg class="zoomc" viewBox="0 0 196 24">
                  <circle cx="14.500" cy="12" r="6.500" fill="#d6e2ee" stroke="#4a6a88" stroke-width="1.500"/><path d="M11 12h7" stroke="#2d4c68" stroke-width="1.600"/>
                  <path d="M30 12h132" stroke="#9a9a9a" stroke-width="1.600"/><path d="M52 4v16M96 4v16" stroke="#888"/>
                  <ellipse cx="87" cy="12" rx="5" ry="6.500" fill="#6a94b8" stroke="#2d4c68"/>
                  <circle cx="178" cy="12" r="6.500" fill="#d6e2ee" stroke="#4a6a88" stroke-width="1.500"/><path d="M174.500 12h7M178 8.500v7" stroke="#2d4c68" stroke-width="1.600"/>
                </svg>
              </div>
              <div class="cell c">90%</div>
            </div>
          </div>
        </div>
      </div>
      <div class="task">
        <svg viewBox="0 0 16 16"><path d="M0 2.300L6.500 1.400V7.500H0zM7.400 1.300L16 0V7.500H7.400zM0 8.400H6.500V14.600L0 13.700zM7.400 8.400H16V16L7.400 14.700z" fill="#fff"/></svg>
      </div>
    `;
  }
}
